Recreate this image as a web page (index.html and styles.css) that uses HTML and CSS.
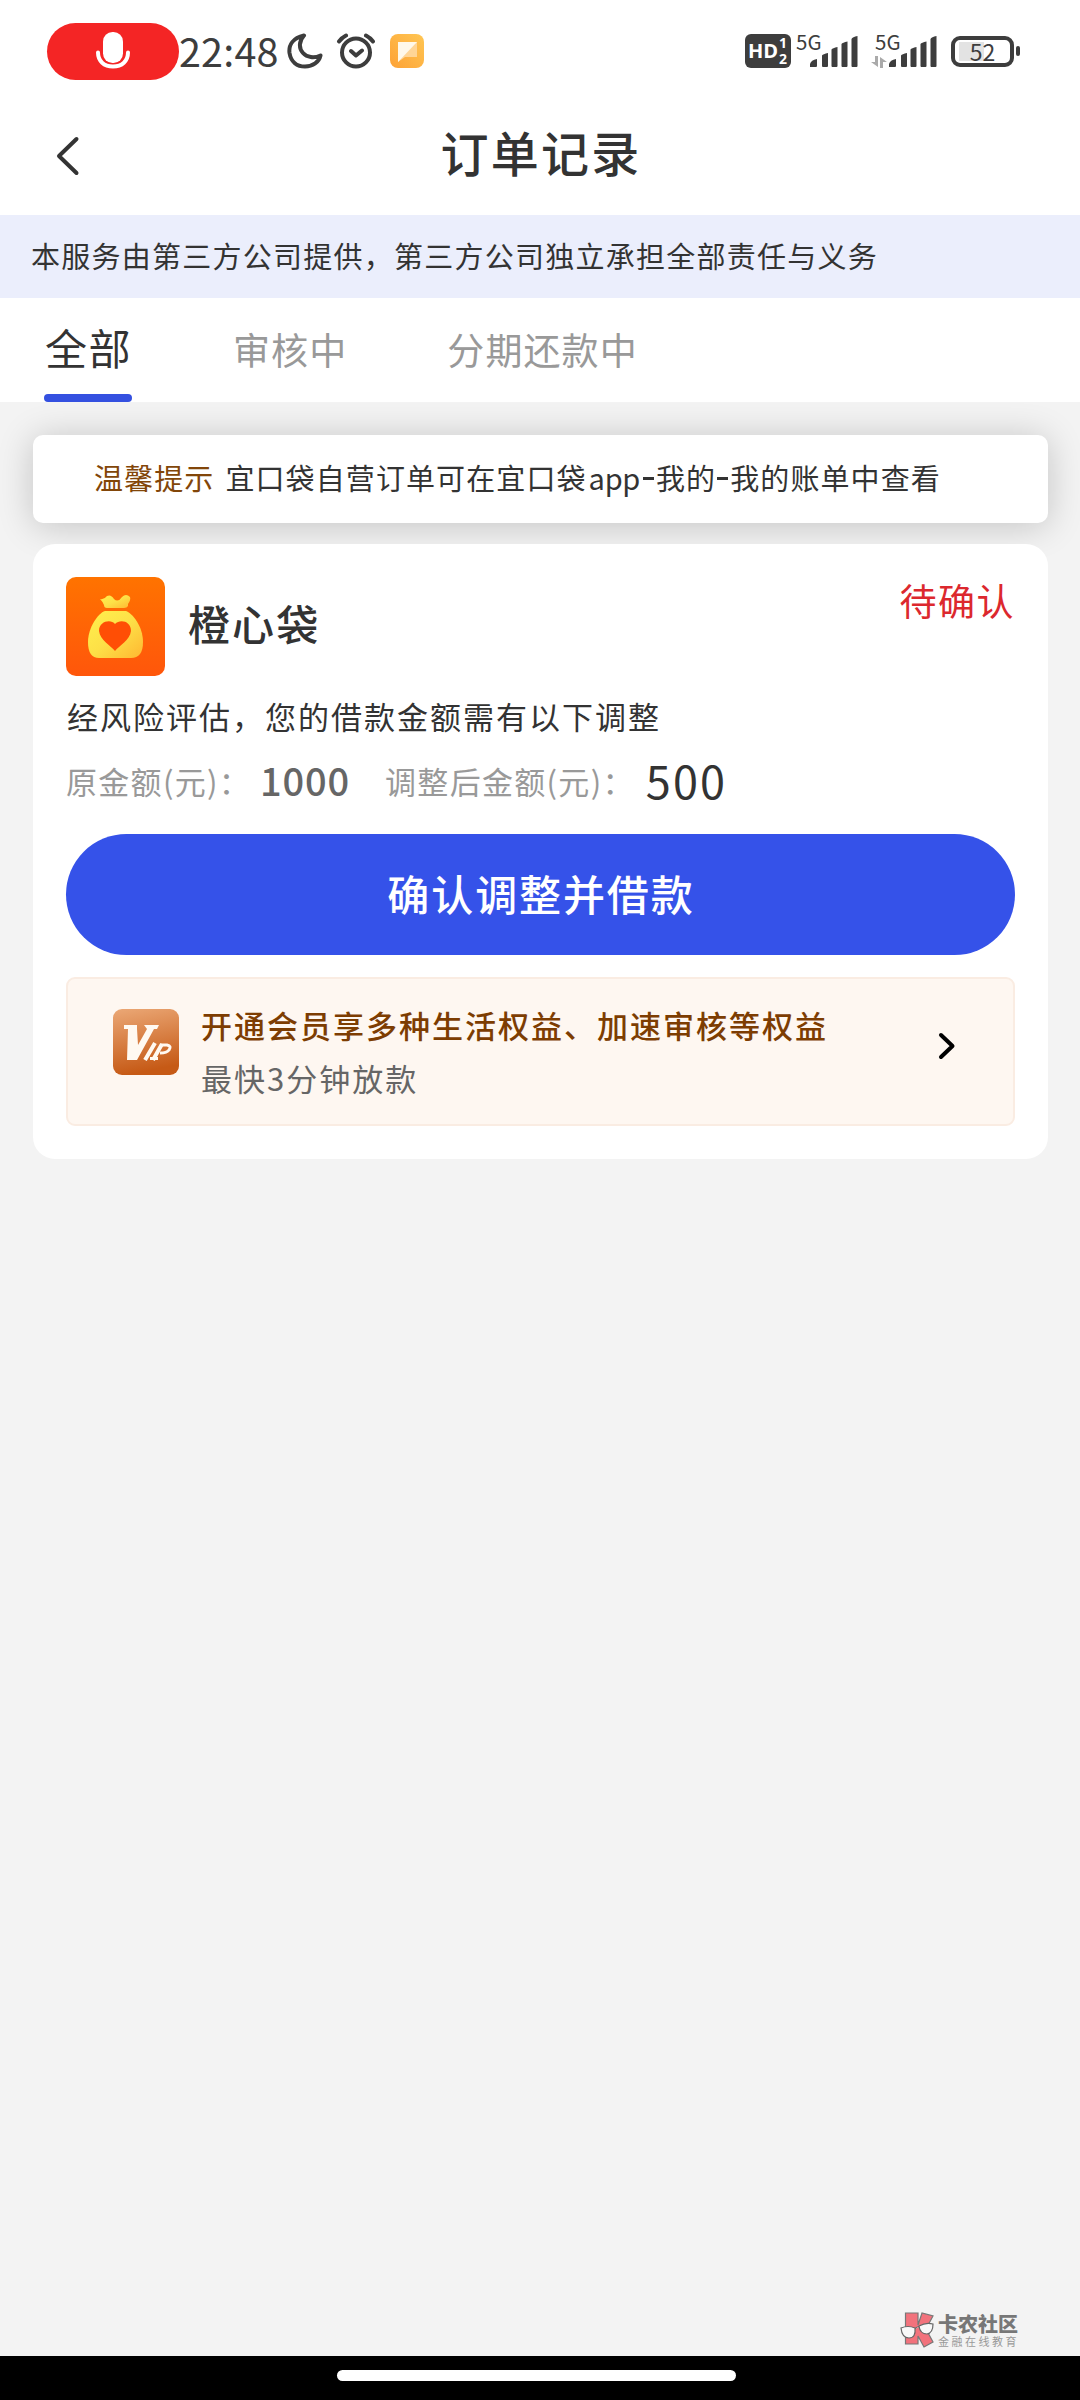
FILE: index.html
```html
<!DOCTYPE html>
<html lang="zh-CN">
<head>
<meta charset="utf-8">
<title>订单记录</title>
<link rel="stylesheet" href="styles.css">
</head>
<body>
<div class="screen">
  <header class="status">
    <div class="rec">
      <svg width="36" height="40" viewBox="0 0 36 40"><rect x="8" y="1" width="20" height="31" rx="9.5" fill="#fff"/><path d="M3 21.500C3 30 9 35.500 18 35.500S33 30 33 21.500" fill="none" stroke="#fff" stroke-width="4" stroke-linecap="round"/></svg>
    </div>
    <div class="time">22:48</div>
    <svg class="moon" width="36" height="36" viewBox="0 0 36 36"><path d="M17 2.500C6 5 1.500 12 2.500 20C4 29 10 33.500 18 33.500C26 33.500 32 29 33.500 22.500C27 25.500 20 24.500 16 20C11.500 15 12 8 17 2.500Z" fill="none" stroke="#3d3d3d" stroke-width="4" stroke-linejoin="round"/></svg>
    <svg class="alarm" width="40" height="36" viewBox="0 0 40 36"><g fill="none" stroke="#3d3d3d" stroke-width="4" stroke-linecap="round" stroke-linejoin="round"><circle cx="20" cy="19.500" r="14"/><path d="M15 18l5 4.500 6-5M3 8.500Q6 4.500 10 2.500M37 8.500Q34 4.500 30 2.500"/></g></svg>
    <svg class="note" width="34" height="34" viewBox="0 0 34 34"><defs><linearGradient id="ng" x1="1" y1="0" x2="0" y2="1"><stop offset="0" stop-color="#ffc653"/><stop offset="1" stop-color="#fda236"/></linearGradient></defs><rect width="34" height="34" rx="8" fill="url(#ng)"/><path d="M8 8h19v15H15l-7 5Z" fill="#ffd596"/><path d="M8 8h19L8 28Z" fill="#fff8ea"/></svg>
    <div class="right">
      <div class="hd"><span>HD</span><div class="sub"><i>1</i><i>2</i></div></div>
      <div class="net"><span>5G</span><svg width="50" height="32" viewBox="0 0 50 32" fill="#3d3d3d"><path d="M0 31v-3q1-4 7-5v7q0 1-1 1zM12 19.500q1-1.500 6-2.500v13q0 1-1 1h-4q-1 0-1-1zM21.500 13.500q1-1.500 6-2.500v19q0 1-1 1h-4q-1 0-1-1zM31.500 8q1-1.500 6-2.500V30q0 1-1 1h-4q-1 0-1-1zM41.500 3q1-2 6-3v30q0 1-1 1h-4q-1 0-1-1z"/></svg></div>
      <div class="net"><span>5G</span><svg class="updown" width="16" height="12" viewBox="0 0 16 12" fill="#aaa"><path d="M4 0h3v11L0 6h4zM9 12V1l7 5h-4v6z"/></svg><svg width="50" height="32" viewBox="0 0 50 32" fill="#3d3d3d"><path d="M0 31v-3q1-4 7-5v7q0 1-1 1zM12 19.500q1-1.500 6-2.500v13q0 1-1 1h-4q-1 0-1-1zM21.500 13.500q1-1.500 6-2.500v19q0 1-1 1h-4q-1 0-1-1zM31.500 8q1-1.500 6-2.500V30q0 1-1 1h-4q-1 0-1-1zM41.500 3q1-2 6-3v30q0 1-1 1h-4q-1 0-1-1z"/></svg></div>
      <div class="battery">52</div><div class="nub"></div>
    </div>
  </header>

  <nav class="titlebar">
    <svg class="back" width="26" height="40" viewBox="0 0 26 40"><path d="M22.500 3L5 20l17.500 17" fill="none" stroke="#333" stroke-width="4" stroke-linecap="round" stroke-linejoin="round"/></svg>
    <h1>订单记录</h1>
  </nav>
  <div class="banner">本服务由第三方公司提供，第三方公司独立承担全部责任与义务</div>
  <div class="tabs">
    <div class="tab active">全部</div>
    <div class="tab">审核中</div>
    <div class="tab">分期还款中</div>
  </div>

  <main>
    <div class="tip"><span class="tip-label">温馨提示</span><span>宜口袋自营订单可在宜口袋<span class="latin">app</span><b></b>我的<b></b>我的账单中查看</span></div>
    <section class="order">
      <div class="head">
        <svg width="99" height="99" viewBox="0 0 99 99"><defs><linearGradient id="og" x1="0" y1="0" x2="0" y2="1"><stop offset="0" stop-color="#ff7300"/><stop offset="1" stop-color="#ff560b"/></linearGradient><linearGradient id="yg" x1="0" y1="0" x2="1" y2="1"><stop offset="0" stop-color="#fff04d"/><stop offset=".5" stop-color="#fde047"/><stop offset="1" stop-color="#ffb731"/></linearGradient></defs><rect width="99" height="99" rx="10" fill="url(#og)"/><path d="M34 22Q38 23 41 19Q45 17 48 22Q52 26 56 20Q60 16 64 20Q65 23 62 27V29Q61 31 58 31H41Q38 31 38 28Q37 25 34 22Z" fill="url(#yg)"/><path d="M39 34H60C66 36 77 49 77 65Q77 81 65 81H33Q22 81 22 65C22 51 32 36 39 34Z" fill="url(#yg)"/><path d="M49 74C45 69 34 63 33 54C33 44 45 42 49 47C54 42 65 44 65 54C64 63 53 69 49 74Z" fill="#ff4e05"/></svg>
        <h2>橙心袋</h2>
        <div class="state">待确认</div>
      </div>
      <p class="risk">经风险评估，您的借款金额需有以下调整</p>
      <div class="amounts">
        <span class="label">原金额(元)：</span><span class="old">1000</span>
        <span class="label">调整后金额(元)：</span><span class="new">500</span>
      </div>
      <button class="confirm">确认调整并借款</button>
      <div class="vip">
        <svg class="vip-icon" width="66" height="66" viewBox="0 0 66 66"><defs><linearGradient id="vg" x1="0" y1="0" x2=".2" y2="1"><stop offset="0" stop-color="#eba876"/><stop offset="1" stop-color="#c65a16"/></linearGradient></defs><rect width="66" height="66" rx="9" fill="url(#vg)"/><path d="M11 16H24V20L25 36L34 20L31 16H46L44 20H41L24 51H14L15 20H11Z" fill="#fff9f1"/><g fill="none" stroke="#fff9f1"><path d="M42 34L32 51M49 35L40 51" stroke-width="4"/><path d="M37 49.500h8M48 36h6q5 1 2 5-2 3-9 3" stroke-width="3"/></g></svg>
        <div class="vip-text"><div class="vip-title">开通会员享多种生活权益、加速审核等权益</div><div class="vip-sub">最快3分钟放款</div></div>
        <svg class="go" width="20" height="30" viewBox="0 0 20 30"><path d="M4 4l11.500 11L4 26" fill="none" stroke="#000" stroke-width="4" stroke-linecap="round" stroke-linejoin="round"/></svg>
      </div>
    </section>
  </main>

  <div class="watermark">
    <svg width="36" height="36" viewBox="0 0 36 36"><path d="M5.500 1H18v12L22 1l11 3-7 13 7 13-9 5-6-11v8H5.500z" fill="#f2727c" stroke="#777" stroke-width="1.200"/><path d="M1 16q7-3 14 0 1 10-6 10-7 0-8-10zM19 14q7-4 14-2 0 9-6 10-7 0-8-8zM15 17q2-3 4-2" fill="#f8f8f8" stroke="#666" stroke-width="1.200"/></svg>
    <div class="wm-text"><div class="wm-name">卡农社区</div><div class="wm-sub">金融在线教育</div></div>
  </div>
  <footer class="homebar"><div></div></footer>
</div>
</body>
</html>
```
FILE: styles.css
```css
* { box-sizing: border-box; }
body { margin: 0; font-family: "Noto Sans CJK SC", sans-serif; color: #333; background: #f3f3f3; }
.screen { width: 1080px; height: 2400px; display: flex; flex-direction: column; background: #f3f3f3; }
svg { display: block; flex: none; }
h1, h2, p { margin: 0; font-weight: 500; }

.status { height: 102px; flex: none; background: #fff; display: flex; align-items: center; padding-left: 47px; }
.rec { width: 132px; height: 57px; border-radius: 29px; background: #f42525; display: flex; justify-content: center; align-items: center; }
.time { width: 108px; margin-top: -3px; font-size: 39.5px; line-height: 56px; color: #3d3d3d; letter-spacing: 0.2px; white-space: nowrap; }
.alarm { margin-left: 13px; }
.note { margin-left: 14px; }
.right { margin-left: auto; margin-right: 60px; display: flex; align-items: center; }
.hd { width: 46px; height: 34px; border-radius: 6px; background: #3d3d3d; color: #fff; display: flex; align-items: center; justify-content: center; font: 700 20px/34px "Open Sans", sans-serif; }
.sub { display: flex; flex-direction: column; width: 10px; text-align: center; }
.sub i { font: 700 14px/16px "Open Sans", sans-serif; }
.net { width: 64px; height: 34px; margin-left: 5px; position: relative; display: flex; justify-content: flex-end; align-items: flex-end; color: #3d3d3d; }
.net + .net { margin-left: 15px; }
.net span { position: absolute; left: 0; top: -3px; font-size: 20.5px; line-height: 20px; }
.net .updown { margin-right: 2px; }
.battery { width: 63px; height: 31px; margin-left: 12px; border: 4px solid #3d3d3d; border-radius: 9px; background: linear-gradient(#e3e3e3, #e3e3e3) 4px 2px / 25px 19px no-repeat; font-size: 23px; line-height: 22px; text-align: center; color: #3d3d3d; }
.nub { width: 4px; height: 10px; margin-left: 2px; border-radius: 2px; background: #3d3d3d; }

.titlebar { height: 113px; flex: none; background: #fff; display: grid; grid-template-columns: 120px 1fr 120px; align-items: center; padding-bottom: 9px; }
.back { margin-left: 54px; margin-top: 3px; }
h1 { margin-top: -6px; font-size: 48px; letter-spacing: 2.200px; line-height: 70px; text-align: center; padding-left: 2px; }
.banner { height: 83px; flex: none; padding-left: 31px; background: #ebeefc; font-size: 29px; letter-spacing: 1.25px; line-height: 81px; }
.tabs { height: 104px; flex: none; padding-left: 44px; background: #fff; display: flex; white-space: nowrap; }
.tab { margin-right: 100px; font-size: 37px; letter-spacing: 1.100px; line-height: 103px; color: #999; }
.tab.active { width: 88px; font-size: 42px; letter-spacing: 1.500px; line-height: 98px; color: #333; padding-left: 1px; position: relative; margin-right: 101px; }
.tab.active::after { content: ""; position: absolute; left: 0; bottom: 0; width: 88px; height: 8px; border-radius: 4px; background: #3450e0; }

main { flex: 1; padding: 33px 32px 0 33px; }
.tip { height: 88px; border-radius: 10px; background: #fff; box-shadow: 0 3px 36px rgba(0,0,0,.2); padding-left: 61px; display: flex; gap: 11px; font-size: 29px; letter-spacing: 1.1px; line-height: 84px; white-space: nowrap; }
.tip-label { color: #824609; }
.latin { letter-spacing: -0.3px; margin: 0 2px; }
.tip b { display: inline-block; width: 11px; height: 3px; background: #333; vertical-align: 10px; margin: 0 2px 0 1px; }
.order { position: relative; margin-top: 21px; height: 615px; border-radius: 22px; background: #fff; padding: 33px 33px 0; }
.head { height: 99px; display: flex; align-items: center; }
h2 { margin-left: 23px; font-size: 42px; letter-spacing: 2.100px; line-height: 60px; margin-top: -8px; }
.state { margin: -2px 0 0 auto; align-self: flex-start; font-size: 37px; letter-spacing: 1.500px; line-height: 50px; color: #dc282e; }
.risk { margin-top: 16px; height: 50px; padding-left: 1px; font-weight: 400; font-size: 31px; letter-spacing: 2px; line-height: 48px; }
.amounts { margin-top: 12px; height: 52px; display: flex; align-items: center; white-space: nowrap; }
.label { font-size: 31px; letter-spacing: 1.300px; color: #999; line-height: 51px; }
.old { width: 125px; margin-left: 9px; font-size: 38px; font-weight: 500; letter-spacing: 0.800px; color: #666; line-height: 52px; }
.new { margin-left: 11px; font-size: 45px; letter-spacing: 2.200px; line-height: 50px; }
.confirm { display: block; margin-top: 28px; width: 949px; height: 121px; border: 0; border-radius: 61px; background: #3552e9; color: #fff; font: 500 42px/117px "Noto Sans CJK SC", sans-serif; letter-spacing: 1.900px; padding: 0 0 6px 1px; }
.vip { margin-top: 22px; width: 949px; height: 149px; border: 2px solid #faece2; border-radius: 9px; background: #fef7f1; display: flex; padding: 0 56px 0 45px; }
.vip-icon { margin-top: 30px; }
.vip-text { margin-left: 22px; padding-top: 19px; font-size: 31px; letter-spacing: 2px; line-height: 53px; white-space: nowrap; }
.vip-title { color: #7d3d02; font-weight: 500; }
.vip-sub { color: #666; }
.go { margin: 52px 0 0 auto; }

.watermark { height: 46px; flex: none; padding: 2px 0 0 900px; display: flex; gap: 2px; color: #777; }
.wm-text { padding-top: 1px; }
.wm-name { font-size: 20px; font-weight: 900; line-height: 21px; }
.wm-sub { font-size: 11px; letter-spacing: 2.500px; line-height: 14px; color: #999; white-space: nowrap; }
.homebar { height: 44px; flex: none; background: #000; padding: 14px 0 0 337px; }
.homebar div { width: 399px; height: 11px; border-radius: 6px; background: #fff; }
```
